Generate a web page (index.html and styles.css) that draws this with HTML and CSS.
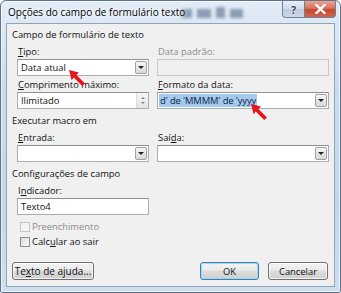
FILE: index.html
```html
<!DOCTYPE html>
<html lang="pt">
<head>
<meta charset="utf-8">
<title>Opções do campo de formulário texto</title>
<link rel="stylesheet" href="styles.css">
</head>
<body>
<div class="window">
  <div class="titlebar">
    <span class="title">Opções do campo de formulário texto</span>
    <div class="glass-blur"><i></i><i></i><i></i><i></i></div>
    <div class="caption-buttons">
      <div class="cap-btn help">?</div>
      <div class="cap-btn close">
        <svg width="11" height="10" viewBox="0 0 11 10"><path d="M1.5 1 L9.5 9 M9.5 1 L1.5 9" stroke="#fff" stroke-width="2.4" stroke-linecap="square"/></svg>
      </div>
    </div>
  </div>
  <div class="client">
    <div class="heading">Campo de formulário de texto</div>
    <div class="grid row1">
      <div class="field">
        <div class="label"><u>T</u>ipo:</div>
        <div class="combo"><span class="value">Data atual</span><span class="drop"><i class="tri"></i></span></div>
      </div>
      <div class="field">
        <div class="label disabled">Data padrão:</div>
        <div class="textbox disabled-box"></div>
      </div>
    </div>
    <div class="grid row2">
      <div class="field">
        <div class="label"><u>C</u>omprimento máximo:</div>
        <div class="combo"><span class="value">Ilimitado</span><span class="spin"><i class="tri-up"></i><i class="tri-dn"></i></span></div>
      </div>
      <div class="field">
        <div class="label"><u>F</u>ormato da data:</div>
        <div class="combo"><span class="value sel">d' de 'MMMM' de 'yyyy</span><span class="drop"><i class="tri"></i></span></div>
      </div>
    </div>
    <div class="heading h2">Executar macro em</div>
    <div class="grid row3">
      <div class="field">
        <div class="label"><u>E</u>ntrada:</div>
        <div class="combo"><span class="value"></span><span class="drop"><i class="tri"></i></span></div>
      </div>
      <div class="field">
        <div class="label">Saí<u>d</u>a:</div>
        <div class="combo"><span class="value"></span><span class="drop"><i class="tri"></i></span></div>
      </div>
    </div>
    <div class="heading h3">Configurações de campo</div>
    <div class="grid row4">
      <div class="field">
        <div class="label">I<u>n</u>dicador:</div>
        <div class="textbox"><span class="value">Texto4</span></div>
      </div>
    </div>
    <div class="check disabled first"><span class="box"></span>Preenchimento</div>
    <div class="check"><span class="box"></span>Calc<u>u</u>lar ao sair</div>
    <div class="buttons">
      <div class="btn help-btn">Te<u>x</u>to de ajuda...</div>
      <div class="spacer"></div>
      <div class="btn default">OK</div>
      <div class="btn cancel">Cancelar</div>
    </div>
  </div>
  <svg class="arrow a1" width="20" height="20" viewBox="0 0 20 20"><path d="M1 1 L11 3.6 L8.4 6 L17 14.4 L14.2 17 L5.8 8.6 L3.6 11.2 Z" fill="#e8141c"/></svg>
  <svg class="arrow a2" width="20" height="20" viewBox="0 0 20 20"><path d="M1 1 L11 3.6 L8.4 6 L17 14.4 L14.2 17 L5.8 8.6 L3.6 11.2 Z" fill="#e8141c"/></svg>
</div>
</body>
</html>
```
FILE: styles.css
```css
* { box-sizing: border-box; }
html, body { margin: 0; padding: 0; background: #ffffff; }
body {
  font-family: "Open Sans", "Noto Sans", sans-serif;
  font-size: 9.4px;
  color: #111;
}
.window {
  position: relative;
  width: 341px;
  height: 293px;
  display: flex;
  flex-direction: column;
  border: 1px solid #5f7389;
  border-radius: 6px 6px 2px 2px;
  background: linear-gradient(180deg, #e2ecf7 0%, #ccdcee 30%, #c4d6ea 70%, #cfdff0 100%);
  box-shadow: inset 0 0 0 1px rgba(255,255,255,0.6);
  overflow: hidden;
}
.titlebar {
  position: relative;
  height: 22px;
  flex: none;
  display: flex;
  align-items: center;
  padding-left: 7px;
}
.title {
  font-size: 10px;
  color: #000;
  text-shadow: 0 0 6px #fff, 0 0 3px #fff;
  position: relative;
  z-index: 1;
}
.glass-blur {
  position: absolute;
  left: 180px;
  top: 8px;
  display: flex;
  gap: 5px;
  filter: blur(1.8px);
  opacity: 0.55;
}
.glass-blur i {
  display: block;
  width: 11px;
  height: 9px;
  background: #45607f;
}
.glass-blur i:nth-child(2) { width: 14px; }
.glass-blur i:nth-child(3) { width: 9px; height: 11px; margin-top: -2px; }
.glass-blur i:nth-child(4) { width: 13px; }
.caption-buttons {
  position: absolute;
  right: 4px;
  top: 0;
  display: flex;
}
.cap-btn {
  height: 17px;
  display: flex;
  align-items: center;
  justify-content: center;
  border: 1px solid #6d7f95;
  border-top: none;
}
.cap-btn.help {
  width: 23px;
  border-radius: 0 0 0 4px;
  background: linear-gradient(180deg, #e6eef7 0%, #cfdceb 50%, #bccbdc 51%, #c9d7e7 100%);
  color: #3c4a5c;
  font-size: 11px;
  font-weight: bold;
  text-shadow: 0 0 2px #fff;
}
.cap-btn.close {
  width: 31px;
  border-left: none;
  border-radius: 0 0 4px 0;
  background: linear-gradient(180deg, #e8a493 0%, #d8735f 45%, #c8452f 55%, #d26650 100%);
}
.client {
  flex: 1;
  margin: 0 5px 5px 5px;
  background: #f0f0f0;
  border: 1px solid #8fa3b9;
  padding: 4px 0 6px 0;
  display: flex;
  flex-direction: column;
  line-height: 13px;
}
.heading {
  height: 13px;
  padding-left: 5px;
}
.h2 { margin-top: 5px; }
.h3 { margin-top: 5px; }
.grid {
  display: grid;
  grid-template-columns: 132px 172px;
  column-gap: 8px;
  padding-left: 10px;
}
.row1 { margin-top: 4px; }
.row2 { margin-top: 2px; }
.row3 { margin-top: 4px; }
.row4 { margin-top: 4px; }
.label {
  height: 13px;
  padding-left: 1px;
  margin-bottom: 1px;
  white-space: nowrap;
}
.label.disabled { color: #8d8d8d; }
.combo, .textbox {
  height: 17px;
  background: #fff;
  border: 1px solid #abadb3;
  border-top-color: #8e9197;
  display: flex;
  align-items: center;
  position: relative;
}
.textbox.disabled-box {
  background: #f0f0f0;
  border-color: #c5c8cc;
}
.value {
  flex: 1;
  padding-left: 3px;
  white-space: nowrap;
  overflow: hidden;
}
.value.sel {
  flex: none;
  margin-left: 1px;
  padding: 0 1px;
  background: #a4c9ee;
  color: #0b1f3a;
  line-height: 13px;
  letter-spacing: -0.1px;
}
.combo .value.sel + .drop { margin-left: auto; }
.drop {
  width: 12px;
  height: 13px;
  margin-right: 1px;
  border: 1px solid #9ea2a8;
  border-radius: 2px;
  background: linear-gradient(180deg, #f6f6f6 0%, #e6e6e6 50%, #d8d8d8 100%);
  display: flex;
  align-items: center;
  justify-content: center;
}
.tri {
  width: 0; height: 0;
  border-left: 3px solid transparent;
  border-right: 3px solid transparent;
  border-top: 3px solid #222;
}
.spin {
  width: 12px;
  height: 15px;
  display: flex;
  flex-direction: column;
  align-items: center;
  justify-content: space-around;
  background: linear-gradient(180deg, #f7f7f7, #e4e4e4);
  border-left: 1px solid #dcdcdc;
  padding: 2px 0;
}
.tri-up, .tri-dn {
  width: 0; height: 0;
  border-left: 2.5px solid transparent;
  border-right: 2.5px solid transparent;
}
.tri-up { border-bottom: 2.5px solid #888; }
.tri-dn { border-top: 2.5px solid #888; }
.check {
  height: 13px;
  display: flex;
  align-items: center;
  padding-left: 13px;
  margin-top: 2px;
}
.check.first { margin-top: 5px; }
.check .box {
  width: 10px;
  height: 10px;
  border: 1px solid #8f8f8f;
  background: linear-gradient(135deg, #dcdcdc, #f8f8f8);
  margin-right: 2px;
}
.check.disabled { color: #8d8d8d; }
.check.disabled .box { border-color: #c4c4c4; background: #f4f4f4; }
.buttons {
  margin-top: auto;
  display: flex;
  padding-left: 5px;
  padding-right: 6px;
}
.spacer { flex: 1; }
.btn {
  height: 18px;
  border: 1px solid #707070;
  border-radius: 3px;
  background: linear-gradient(180deg, #f2f2f2 0%, #ebebeb 45%, #dddddd 50%, #cfcfcf 100%);
  display: flex;
  align-items: center;
  justify-content: center;
  white-space: nowrap;
  box-shadow: inset 0 0 0 1px rgba(255,255,255,0.7);
}
.help-btn { width: 82px; font-size: 10px; }
.btn.default {
  width: 59px;
  border-color: #3c7fb1;
  box-shadow: inset 0 0 0 1px #a6d7f2;
}
.btn.cancel { width: 60px; margin-left: 9px; }
.arrow { position: absolute; }
.a1 { left: 67px; top: 68px; }
.a2 { left: 249px; top: 102px; }
```
